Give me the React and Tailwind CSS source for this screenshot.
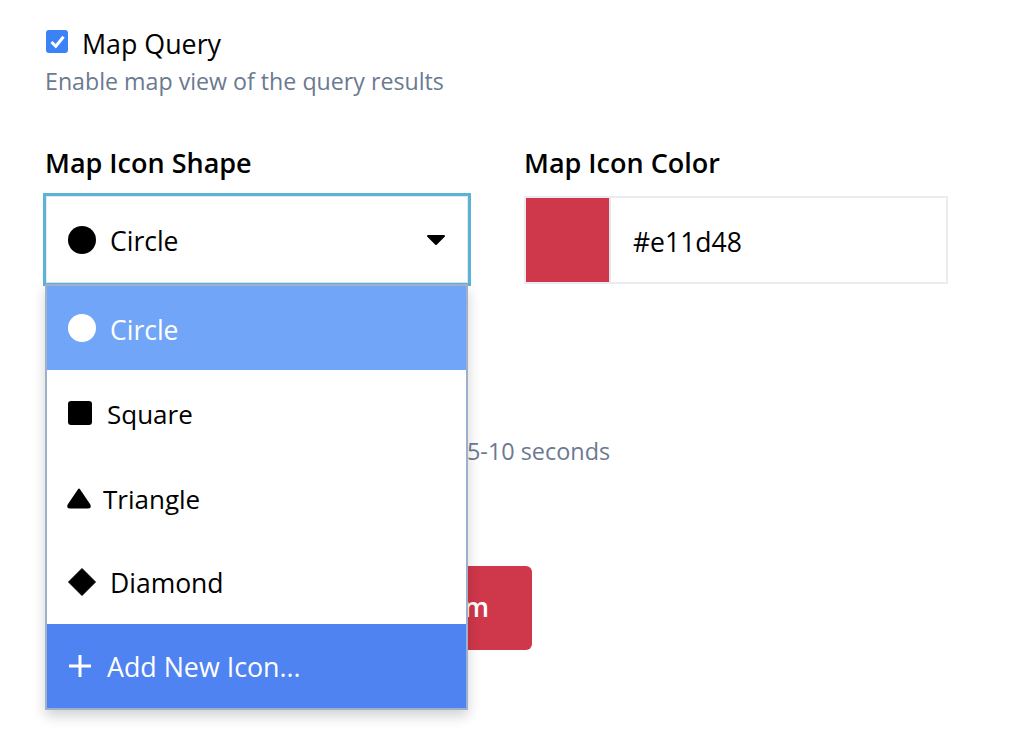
const font = { fontFamily: '"Open Sans", sans-serif' };

const CircleIcon = ({ color = '#000' }) => (
  <svg width="30" height="30" viewBox="0 0 30 30" className="shrink-0">
    <circle cx="15" cy="15" r="14" fill={color} />
  </svg>
);

const SquareIcon = () => (
  <svg width="26" height="26" viewBox="0 0 26 26" className="shrink-0">
    <rect x="1" y="1" width="24" height="24" rx="3" fill="#000" />
  </svg>
);

const TriangleIcon = () => (
  <svg width="26" height="22" viewBox="0 0 26 22" className="shrink-0">
    <path d="M13 2.5 L23.5 18 Q24.5 20.5 22 20.5 L4 20.5 Q1.5 20.5 2.5 18 Z" fill="#000" stroke="#000" strokeWidth="2" strokeLinejoin="round" />
  </svg>
);

const DiamondIcon = () => (
  <svg width="30" height="30" viewBox="0 0 30 30" className="shrink-0">
    <path d="M15 1.5 L28.5 15 L15 28.5 L1.5 15 Z" fill="#000" stroke="#000" strokeWidth="1" strokeLinejoin="round" />
  </svg>
);

const PlusIcon = () => (
  <svg width="24" height="24" viewBox="0 0 24 24" className="shrink-0">
    <path d="M12 1 V23 M1 12 H23" stroke="#fff" strokeWidth="3" />
  </svg>
);

const App = () => {
  return (
    <div className="h-[742px] overflow-hidden bg-white pl-[45px] pt-[30px] text-[26.5px] text-black" style={font}>
      <div className="flex h-[28px] items-start">
        <span className="ml-[1px] flex h-[23px] w-[22px] items-center justify-center rounded-[3px] bg-[#3b82f6]">
          <svg width="17" height="17" viewBox="0 0 17 17">
            <path d="M2.5 9 L6.8 13.2 L14.5 3.8" fill="none" stroke="#fff" strokeWidth="3" />
          </svg>
        </span>
        <span className="ml-[14px] text-[26.8px] leading-[28px]">Map Query</span>
      </div>
      <p className="mt-[6px] text-[23.2px] leading-[34px] text-[#6b7a90]">Enable map view of the query results</p>

      <div className="mt-[47px] flex">
        <div className="w-[424px]">
          <div className="text-[27px] font-semibold leading-[36px]">Map Icon Shape</div>
          <div className="relative ml-[-2px] mt-[12px] w-[428px]">
            <div className="flex h-[93px] items-center border-[3px] border-[#5ab4d6] pl-[21px] pr-[22px] shadow-[inset_0_0_0_1px_#e5e7eb]">
              <CircleIcon />
              <span className="ml-[13px] mt-[5px]">Circle</span>
              <svg width="20" height="12" viewBox="0 0 20 12" className="ml-auto">
                <path d="M2 2 H18 L10 10 Z" fill="#000" stroke="#000" strokeWidth="2" strokeLinejoin="round" />
              </svg>
            </div>
            <div className="absolute left-[2px] top-[91px] z-10 w-[423px] border-2 border-[#9fb0cc] bg-white shadow-[0_6px_12px_rgba(0,0,0,0.18)]">
              <div className="flex h-[84px] items-center bg-[#70a5f7] pl-[20px] text-white">
                <CircleIcon color="#fff" />
                <span className="ml-[13px] mt-[5px]">Circle</span>
              </div>
              <div className="flex h-[85px] items-center pl-[20px]">
                <SquareIcon />
                <span className="ml-[14px] mt-[4px] text-[26px]">Square</span>
              </div>
              <div className="flex h-[85px] items-center pl-[19px]">
                <TriangleIcon />
                <span className="ml-[11px] mt-[4px] text-[26px]">Triangle</span>
              </div>
              <div className="flex h-[84px] items-center pl-[20px]">
                <DiamondIcon />
                <span className="ml-[13px] mt-[4px]">Diamond</span>
              </div>
              <div className="flex h-[84px] items-center bg-[#4f83f1] pl-[21px] text-white">
                <PlusIcon />
                <span className="ml-[15px] mt-[3px] text-[26.8px]">Add New Icon...</span>
              </div>
            </div>
          </div>
        </div>
        <div className="ml-[55px] w-[424px]">
          <div className="text-[27px] font-semibold leading-[36px]">Map Icon Color</div>
          <div className="mt-[15px] flex h-[88px] border-2 border-[#ebebf0]">
            <div className="w-[85px] border-r-2 border-[#e5e5ea] bg-[#cf374b]" />
            <div className="flex items-center pl-[22px] pt-[5px]">#e11d48</div>
          </div>
        </div>
      </div>

      <p className="mt-[148px] whitespace-nowrap text-[23.4px] leading-[34px] text-[#6b7a90]">
        <span className="inline-block w-[422px]">Queries usually finish in about</span>5-10 seconds
      </p>
      <button className="mt-[98px] flex h-[84px] w-[487px] items-center justify-end rounded-[6px] bg-[#cf374b] pr-[43px] font-semibold text-white">
        Save and Run Form
      </button>
    </div>
  );
};

export default App;
